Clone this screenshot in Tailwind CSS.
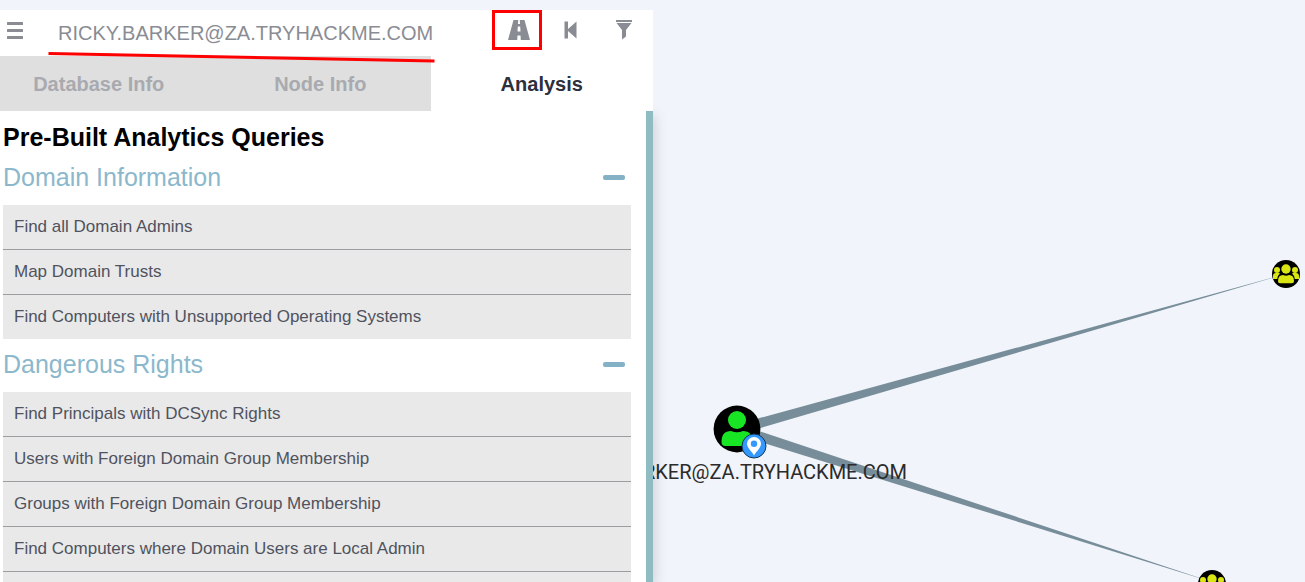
<!DOCTYPE html>
<html lang="en">
<head>
<meta charset="utf-8">
<title>BloodHound</title>
<script src="https://cdn.jsdelivr.net/npm/@tailwindcss/browser@4"></script>
</head>
<body class="relative h-screen overflow-hidden bg-[#f1f4fa] font-['Liberation_Sans',Arial,sans-serif]">

<!-- Graph canvas -->
<svg class="absolute top-0 left-0" width="1305" height="582" viewBox="0 0 1305 582" role="img" aria-label="Graph">
  <defs>
    <g id="group">
      <circle r="14" fill="#000"/>
      <g fill="#d9e614">
        <circle cx="-9" cy="-4" r="3"/>
        <circle cx="9" cy="-4" r="3"/>
        <path d="M-13 5v-3q0-3 3-3h2.500q1 0 1.500.6q-2.500 2-2.800 5.400zM13 5v-3q0-3-3-3h-2.500q-1 0-1.500.6q2.500 2 2.800 5.400z"/>
        <circle cx="0" cy="-5" r="4.700"/>
        <path d="M-8 7q0-6 5-6q3 1.500 6 0q5 0 5 6q0 2.300-2 2.300h-12q-2 0-2-2.300z"/>
      </g>
    </g>
  </defs>
  <path d="M736 424.500L1286 274L738 434.500zM735 434L1212 582L738 424z" fill="#778e9a"/>
  <circle cx="737" cy="429" r="23.400" fill="#000"/>
  <g fill="#18e624">
    <circle cx="737" cy="420" r="9"/>
    <path d="M721.500 442q0-11 9.500-11q6 2.500 12 0q9.500 0 9.500 11q0 4-4 4h-23q-4 0-4-4z"/>
  </g>
  <circle cx="754" cy="446" r="12" fill="#3399ff" stroke="#143354" stroke-width="1"/>
  <path fill-rule="evenodd" d="M754 455.500c-2-4-7-7.500-7-12a7 6.500 0 0 1 14 0c0 4.500-5 8-7 12zM754 440.500a3.200 3.200 0 1 0 0 6.400a3.200 3.200 0 0 0 0-6.400z" fill="#fff"/>
  <text x="907" y="479" text-anchor="end" font-family="Roboto, sans-serif" font-size="20" fill="#2b2b2b">RICKY.BARKER@ZA.TRYHACKME.COM</text>
  <use href="#group" x="1286" y="274"/>
  <use href="#group" x="1212" y="584"/>
</svg>

<!-- Side panel -->
<aside class="relative flex h-full w-1/2 flex-col pt-[10px]">
  <form class="relative z-10 flex h-[46px] shrink-0 items-center bg-white text-[#8a8c94]">
    <button type="button" aria-label="Menu" class="mb-[6px] ml-[6px]">
      <svg width="18" height="18" viewBox="0 0 18 18" fill="currentColor"><rect x="1" y="1" width="16" height="3" rx=".5"/><rect x="1" y="8" width="16" height="3" rx=".5"/><rect x="1" y="15" width="16" height="3" rx=".5"/></svg>
    </button>
    <input type="text" aria-label="Search for a node" value="RICKY.BARKER@ZA.TRYHACKME.COM" class="ml-[34px] h-[46px] min-w-0 flex-1 bg-transparent text-[20px] outline-none">
    <button type="button" aria-label="Pathfinding" class="mb-[6px] flex h-10 w-[50px] items-center justify-center border-3 border-[#ff0000] pl-[4px]">
      <svg width="24" height="22" viewBox="0 0 24 22" fill="currentColor"><path fill-rule="evenodd" d="M6.500 1H17.500L23 21H13.800L13.500 16.500H10.500L10.200 21H1zM11.200 1L11 5H13L12.800 1zM10.800 7.500L10.500 12.500H13.500L13.200 7.500z"/></svg>
    </button>
    <button type="button" aria-label="Back" class="mb-[6px] ml-[21px]">
      <svg width="16" height="20" viewBox="0 0 16 20" fill="currentColor"><path d="M1.500 1.500H5V9L13.500 1.500V18.500L5 11V18.500H1.500z"/></svg>
    </button>
    <button type="button" aria-label="Filter" class="mr-[20px] mb-[6px] ml-[36px]">
      <svg width="18" height="20" viewBox="0 0 18 20" fill="currentColor"><path d="M1 0H17V2H1zM1.500 3H16.500L11 10V16.500L7 19.500V10z"/></svg>
    </button>
  </form>

  <nav role="tablist" class="relative z-10 -ml-3 flex h-[55px] shrink-0 text-[20px] font-bold">
    <button type="button" role="tab" class="flex-1 bg-[#dfdfdf] text-[#a9aaaf]">Database Info</button>
    <button type="button" role="tab" class="flex-1 bg-[#dfdfdf] text-[#a9aaaf]">Node Info</button>
    <button type="button" role="tab" aria-selected="true" class="flex-1 bg-white text-[#2c2f3d]">Analysis</button>
  </nav>

  <main class="min-h-0 flex-1 overflow-hidden border-r-[7px] border-[#8fbcc2] bg-white pr-[15px] pl-[3px] shadow-[2px_4px_12px_rgba(0,0,0,0.15)]">
    <h1 class="pt-[11px] text-[25px] leading-[30px] font-bold text-black">Pre-Built Analytics Queries</h1>

    <section>
      <h2 class="flex h-[53px] items-center justify-between pr-[6px] pb-[2px] text-[25px] text-[#8bb8cc]">Domain Information
        <button type="button" aria-label="Collapse Domain Information" class="h-[5px] w-[22px] rounded-xs bg-[#84b1c6]"></button>
      </h2>
      <ul class="divide-y divide-[#9b9ea1] bg-[#e9e9e9] text-[17px] leading-5 text-[#50535e]">
        <li><a href="#" class="block px-[11px] py-3">Find all Domain Admins</a></li>
        <li><a href="#" class="block px-[11px] py-3">Map Domain Trusts</a></li>
        <li><a href="#" class="block px-[11px] py-3">Find Computers with Unsupported Operating Systems</a></li>
      </ul>
    </section>

    <section>
      <h2 class="flex h-[53px] items-center justify-between pr-[6px] pb-[2px] text-[25px] text-[#8bb8cc]">Dangerous Rights
        <button type="button" aria-label="Collapse Dangerous Rights" class="h-[5px] w-[22px] rounded-xs bg-[#84b1c6]"></button>
      </h2>
      <ul class="divide-y divide-[#9b9ea1] bg-[#e9e9e9] text-[17px] leading-5 text-[#50535e]">
        <li><a href="#" class="block px-[11px] py-3">Find Principals with DCSync Rights</a></li>
        <li><a href="#" class="block px-[11px] py-3">Users with Foreign Domain Group Membership</a></li>
        <li><a href="#" class="block px-[11px] py-3">Groups with Foreign Domain Group Membership</a></li>
        <li><a href="#" class="block px-[11px] py-3">Find Computers where Domain Users are Local Admin</a></li>
        <li class="h-11"></li>
      </ul>
    </section>
  </main>
</aside>

<!-- Underline marking the selected user -->
<svg class="pointer-events-none absolute top-[48px] left-[46px] z-20" width="392" height="18" viewBox="0 0 392 18" aria-hidden="true">
  <path d="M2.500 5.500L388.500 13" stroke="#f00" stroke-width="3" fill="none"/>
</svg>
</body>
</html>
